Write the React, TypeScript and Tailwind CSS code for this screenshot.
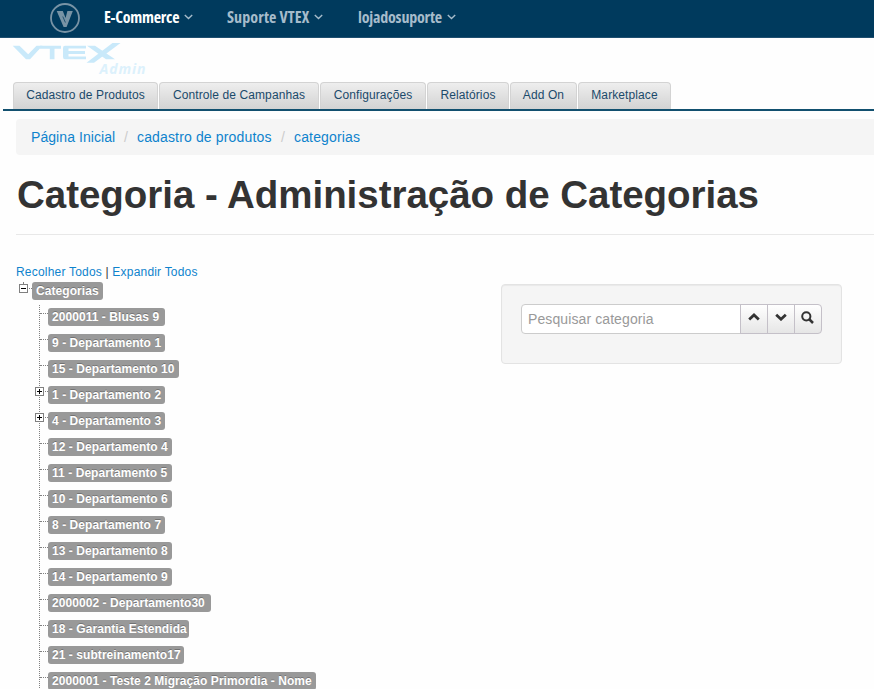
import React from "react";

const menus = [
  { label: "E-Commerce", left: "ml-[24px]", box: "w-[74px] tracking-[-0.25px]", color: "text-white" },
  { label: "Suporte VTEX", left: "ml-[34px]", box: "w-[81px] tracking-[0.1px]", color: "text-[#a6bccb]" },
  { label: "lojadosuporte", left: "ml-[35px]", box: "w-[83px] tracking-[-0.2px]", color: "text-[#a6bccb]" },
];

const tabs = [
  { label: "Cadastro de Produtos", box: "w-[145px]" },
  { label: "Controle de Campanhas", box: "w-[160px]" },
  { label: "Configurações", box: "w-[106px]" },
  { label: "Relatórios", box: "w-[82px]" },
  { label: "Add On", box: "w-[67px]" },
  { label: "Marketplace", box: "w-[93px]" },
];

const nodes = [
  { label: "2000011 - Blusas 9", box: "w-[117px]" },
  { label: "9 - Departamento 1", box: "w-[117px]" },
  { label: "15 - Departamento 10", box: "w-[131px]" },
  { label: "1 - Departamento 2", box: "w-[117px]", plus: true },
  { label: "4 - Departamento 3", box: "w-[117px]", plus: true },
  { label: "12 - Departamento 4", box: "w-[124px]" },
  { label: "11 - Departamento 5", box: "w-[124px]" },
  { label: "10 - Departamento 6", box: "w-[124px]" },
  { label: "8 - Departamento 7", box: "w-[117px]" },
  { label: "13 - Departamento 8", box: "w-[124px]" },
  { label: "14 - Departamento 9", box: "w-[124px]" },
  { label: "2000002 - Departamento30", box: "w-[163px]" },
  { label: "18 - Garantia Estendida", box: "w-[141px]" },
  { label: "21 - subtreinamento17", box: "w-[136px]" },
  { label: "2000001 - Teste 2 Migração Primordia - Nome", box: "w-[268px]" },
];

function Toggle({ plus = false }: { plus?: boolean }) {
  return (
    <svg width="9" height="9" viewBox="0 0 9 9" shapeRendering="crispEdges" className="block">
      <rect x="0.5" y="0.5" width="8" height="8" fill="#fff" stroke="#808080" />
      <path d="M2 4.5H7" stroke="#000" />
      {plus && <path d="M4.5 2V7" stroke="#000" />}
    </svg>
  );
}

const tag =
  "flex h-[18px] items-center rounded-[3px] bg-[#999] pl-1 text-[12px] font-bold tracking-[0.06px] whitespace-nowrap text-white [text-shadow:0_-1px_0_rgba(0,0,0,0.25)]";
const button =
  "flex h-[30px] items-center justify-center border border-[#c4c0c8] bg-linear-to-b from-white to-[#e6e6e6] pr-px pb-1";

export default function App() {
  return (
    <div className="h-[689px] w-[874px] overflow-hidden bg-[#fefefe] font-['Liberation_Sans',Arial,sans-serif] text-[#333]">
      <header className="flex h-[38px] border-b border-[#1f4f70] bg-[#003a5d] pl-[50px]">
        <svg width="30" height="30" viewBox="0 0 30 30" className="mt-[3px] block">
          <circle cx="15" cy="15" r="14" fill="none" stroke="#7893a5" strokeWidth="1.8" />
          <path d="M6.7 8H12.8L15.6 15L17.4 8H22.8L16.6 24H13.6Z" fill="#7893a5" />
          <path d="M12.8 13.5L15.4 19.5" stroke="#003a5d" strokeWidth="0.7" />
        </svg>
        {menus.map((m) => (
          <div key={m.label} className={`flex h-[34px] items-center ${m.left} ${m.color}`}>
            <span className={`${m.box} font-['Open_Sans',sans-serif] text-[16px] font-bold whitespace-nowrap [font-stretch:75%]`}>
              {m.label}
            </span>
            <svg width="9" height="6" viewBox="0 0 9 6" className="ml-[6px]">
              <path d="M0.8 1L4.5 4.6L8.2 1" fill="none" stroke="#a6bccb" strokeWidth="1.4" />
            </svg>
          </div>
        ))}
      </header>

      <div className="h-[44px] pl-[12px]">
        <svg width="140" height="40" viewBox="0 0 140 40" className="block">
          <g fill="#c9e9fa">
            <path d="M0.7 7.7H7.5L16.2 16.3L24.5 7.7H30.5L18 21.3H14Z" />
            <path d="M28 7.7H49V10.8H42.5V21.3H37.8V10.8H28Z" />
            <path d="M53 7.7H74V10.6H56.5V13H73V16H56.5V18.4H74V21.3H53Q51 21.3 51 19V10Q51 7.7 53 7.7Z" />
            <path d="M100.5 5H108.5L82 24.7H74.5Z" />
            <path d="M75 7.7H83L103 21.3H94Z" />
          </g>
          <text x="87.5" y="35.5" fill="#dcf1fc" fontSize="14" fontWeight="bold" fontStyle="italic" fontFamily="Open Sans" textLength="46">
            Admin
          </text>
        </svg>
      </div>

      <nav className="ml-[3px] flex h-[29px] gap-px border-b-2 border-[#12506f] pl-[10px]">
        {tabs.map((t) => (
          <div
            key={t.label}
            className={`${t.box} flex h-[27px] items-center justify-center rounded-t-[4px] border border-b-0 border-[#d3d3d3] bg-linear-to-b from-[#eeeeee] to-[#d3d3d3] pb-[2px] text-[12px] tracking-[0.1px] whitespace-nowrap text-[#1b4a6b]`}
          >
            {t.label}
          </div>
        ))}
      </nav>

      <div className="ml-4 pt-2">
        <div className="flex h-9 items-center rounded-l-[4px] bg-[#f5f5f5] pl-[15px] text-[14px] text-[#0e83cd]">
          <span className="w-[84px] tracking-[0.07px] whitespace-nowrap">Página Inicial</span>
          <span className="w-[22px] text-center text-[#ccc]">/</span>
          <span className="w-[135px] tracking-[0.15px] whitespace-nowrap">cadastro de produtos</span>
          <span className="w-[22px] text-center text-[#ccc]">/</span>
          <span className="tracking-[0.15px]">categorias</span>
        </div>
        <h1 className="h-[80px] border-b border-[#e8e8e8] pt-[20px] pl-px text-[38.5px] leading-[40px] font-bold tracking-[-0.03px] whitespace-nowrap">
          Categoria - Administração de Categorias
        </h1>
      </div>

      <main className="flex pl-4">
        <div className="w-[485px] pt-[27px]">
          <div className="h-[20px] text-[12px] leading-[20px] tracking-[0.2px] whitespace-nowrap">
            <span className="text-[#0e83cd]">Recolher Todos</span> | <span className="text-[#0e83cd]">Expandir Todos</span>
          </div>
          <div className="flex h-[23px]">
            <div className="flex w-4 pl-[3px]">
              <div>
                <div className="ml-1 h-[2px] border-l border-dotted border-[#808080]" />
                <Toggle />
              </div>
              <div className="mt-[6px] ml-[1px] h-px w-[3px] border-t border-dotted border-[#808080]" />
            </div>
            <div className={`${tag} w-[71px]`}>Categorias</div>
          </div>
          <ul className="ml-[23px] border-l border-dotted border-[#808080] pt-[3px]">
            {nodes.map((n) => (
              <li key={n.label} className="relative flex h-[26px] pl-2">
                <div className="absolute top-[5px] left-0 w-2 border-t border-dotted border-[#808080]" />
                {n.plus && (
                  <div className="absolute top-[1px] left-[-5px]">
                    <Toggle plus />
                  </div>
                )}
                <div className={`${tag} ${n.box}`}>{n.label}</div>
              </li>
            ))}
          </ul>
        </div>

        <section className="mt-[49px] flex h-[80px] w-[341px] rounded-[4px] border border-[#e3e3e3] bg-[#f5f5f5] pt-[19px] pl-[19px] shadow-[inset_0_1px_1px_rgba(0,0,0,0.05)]">
          <div className="flex h-[30px] w-[220px] items-center rounded-l-[4px] border border-[#ccc] bg-white pl-[6px] text-[14px] tracking-[0.1px] text-[#999]">
            Pesquisar categoria
          </div>
          <div className={`${button} -ml-px w-[28px]`}>
            <svg width="12" height="8" viewBox="0 0 12 8"><path d="M1.2 6.5L6 2L10.8 6.5" fill="none" stroke="#333" strokeWidth="2.8" /></svg>
          </div>
          <div className={`${button} -ml-px w-[28px]`}>
            <svg width="12" height="8" viewBox="0 0 12 8"><path d="M1.2 1.7L6 6.2L10.8 1.7" fill="none" stroke="#333" strokeWidth="2.8" /></svg>
          </div>
          <div className={`${button} -ml-px w-[28px] rounded-r-[4px]`}>
            <svg width="13" height="13" viewBox="0 0 13 13">
              <circle cx="5.3" cy="5.3" r="4.1" fill="none" stroke="#333" strokeWidth="2" />
              <path d="M8 8L12 12" stroke="#333" strokeWidth="2.5" />
            </svg>
          </div>
        </section>
      </main>
    </div>
  );
}
